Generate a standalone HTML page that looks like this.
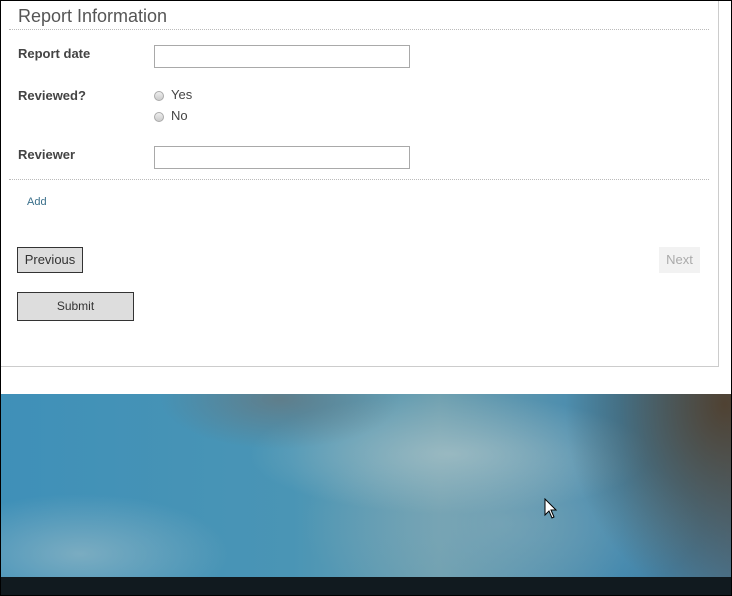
<!DOCTYPE html>
<html><head><style>
*{margin:0;padding:0;box-sizing:border-box}
body{width:732px;height:596px;overflow:hidden;background:#fff;font-family:"Liberation Sans",Arial,sans-serif;position:relative;color:#333}
.frame{position:absolute;inset:0;border:1px solid #000;pointer-events:none;z-index:5}
.panel{position:absolute;left:0;top:0;width:719px;height:367px;border-right:1px solid #ccc;border-bottom:1px solid #ccc}
.abs{position:absolute}
h2{position:absolute;left:18px;top:6px;font-size:18px;font-weight:normal;color:#555}
.hr{position:absolute;left:9px;width:700px;border-top:1px dotted #bbb}
.lbl{position:absolute;left:18px;font-size:13px;font-weight:bold;color:#444}
.inp{position:absolute;left:154px;width:256px;height:23px;border:1px solid #a9a9a9;background:#fff}
.radio{position:absolute;left:154px;width:10px;height:10px;border-radius:50%;border:1px solid #aaa;background:linear-gradient(#eee,#ccc)}
.rt{position:absolute;left:171px;font-size:13px;color:#444}
.btn{position:absolute;border:1px solid #333;background:#ddd;font-size:13px;color:#333;text-align:center}
.water{position:absolute;left:0;top:394px;width:732px;height:183px;background:
radial-gradient(ellipse 120px 50px at 280px 5px,rgba(110,110,110,.6),transparent),
radial-gradient(ellipse 160px 200px at 725px 10px,rgba(80,60,40,.9),transparent),
radial-gradient(ellipse 200px 60px at 450px 60px,rgba(170,195,200,.7),transparent),
radial-gradient(ellipse 150px 60px at 80px 160px,rgba(160,190,200,.6),transparent),
radial-gradient(ellipse 200px 90px at 500px 130px,rgba(130,170,185,.6),transparent),
linear-gradient(90deg,#3f90b8,#4a95b5 40%,#6fa0b0 60%,#3f86ad 85%,#4a7590)}
.dark{position:absolute;left:0;top:577px;width:732px;height:19px;background:#111a1f}
</style></head><body>
<div class="panel"></div>
<h2>Report Information</h2>
<div class="hr" style="top:29px"></div>
<div class="lbl" style="top:46px">Report date</div>
<div class="inp" style="top:45px"></div>
<div class="lbl" style="top:88px">Reviewed?</div>
<div class="radio" style="top:91px"></div><div class="rt" style="top:87px">Yes</div>
<div class="radio" style="top:112px"></div><div class="rt" style="top:108px">No</div>
<div class="lbl" style="top:147px">Reviewer</div>
<div class="inp" style="top:146px"></div>
<div class="hr" style="top:179px"></div>
<div class="abs" style="left:27px;top:196px;font-size:11px;color:#3a6f8a">Add</div>
<div class="btn" style="left:17px;top:247px;width:66px;height:26px;line-height:24px">Previous</div>
<div class="abs" style="left:659px;top:247px;width:41px;height:26px;background:#f2f2f2;color:#aaa;font-size:13px;line-height:26px;text-align:center">Next</div>
<div class="btn" style="left:17px;top:292px;width:117px;height:29px;line-height:27px;font-size:12px">Submit</div>
<div class="water"></div>
<div class="dark"></div>
<svg class="abs" style="left:544px;top:498px" width="14" height="22" viewBox="0 0 14 22"><path d="M1 1L1 17L5 13L8 20L10 19L7 12L12 12Z" fill="#fff" stroke="#000"/></svg>
<div class="frame"></div>
</body></html>
